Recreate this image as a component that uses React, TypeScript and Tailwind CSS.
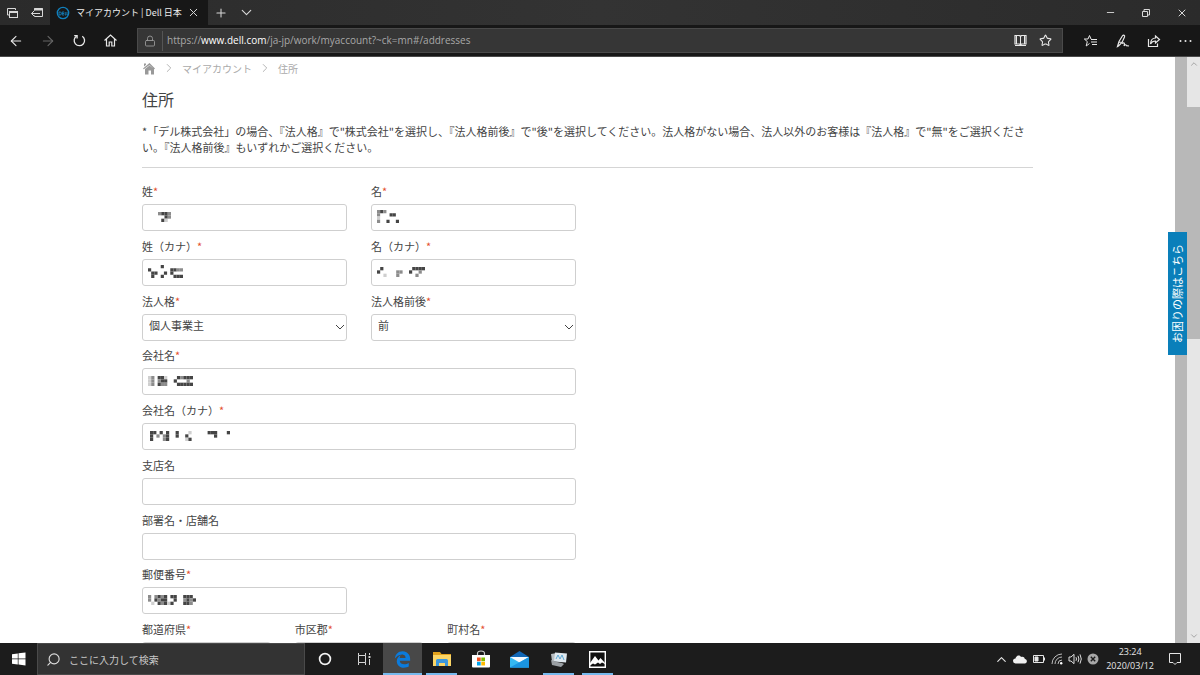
import type { ReactNode } from "react"
import { ArrowLeft, ArrowRight, ChevronDown, ChevronRight, ChevronUp, Lock, Minus, Plus, Search, Star, X } from "lucide-react"
import { FaEdgeLegacy } from "react-icons/fa6"

const SHADES: Record<string, string> = { "#": "#454545", "+": "#8c8c8c", ".": "#cfcfcf" }

// Pixelated personal data, one character per block
function Mosaic({ rows, className }: { rows: string[]; className: string }) {
    const cols = Math.max(...rows.map((r) => r.length))
    return (
        <svg
            className={`pointer-events-none absolute ${className}`}
            width={Math.round(cols * 3.2)}
            height={Math.round(rows.length * 3.2)}
            viewBox={`0 0 ${cols} ${rows.length}`}
            preserveAspectRatio="none"
            aria-hidden="true"
        >
            {rows.flatMap((row, y) =>
                row.split("").map((c, x) =>
                    SHADES[c] ? <rect key={`${x}-${y}`} x={x} y={y} width="1" height="1" fill={SHADES[c]} /> : null
                )
            )}
        </svg>
    )
}

const boxStyle = "block h-[27px] w-full rounded-[3px] border border-[#cfcfcf] bg-white px-1.5 text-[11px] text-[#444] outline-none"

function Label({ id, text, required }: { id: string; text: string; required?: boolean }) {
    return (
        <label htmlFor={id} className="block h-6 text-[11px] leading-[22px] whitespace-nowrap">
            {text}
            {required && <span className="text-[#e4502e]">*</span>}
        </label>
    )
}

function Field({ id, text, required, children }: { id: string; text: string; required?: boolean; children?: ReactNode }) {
    return (
        <div>
            <Label id={id} text={text} required={required} />
            <div className="relative">
                <input id={id} type="text" className={boxStyle} />
                {children}
            </div>
        </div>
    )
}

function SelectField({ id, text, options }: { id: string; text: string; options: string[] }) {
    return (
        <div>
            <Label id={id} text={text} required />
            <div className="relative">
                <select id={id} className={`${boxStyle} appearance-none pb-1`}>
                    {options.map((o) => (
                        <option key={o}>{o}</option>
                    ))}
                </select>
                <svg className="pointer-events-none absolute top-2.5 right-0.5" width="10" height="7" fill="none" stroke="#444">
                    <path d="M1 1l4 4 4-4" />
                </svg>
            </div>
        </div>
    )
}

function TitleBar() {
    return (
        <div className="flex h-[25px] items-stretch bg-linear-to-r from-[#2b2b2b] via-[#333] to-[#2b2b2b] text-[#d8d8d8]">
            <div className="flex w-[50px] items-center justify-between pr-1.5 pl-1.5">
                <button aria-label="タブ一覧">
                    <svg width="13" height="12" fill="none" stroke="currentColor">
                        <path d="M3 8H1.500V1.500H9.500V3" />
                        <rect x="3.500" y="4.500" width="8" height="6" />
                        <path d="M3.500 5h8" strokeWidth="2" />
                    </svg>
                </button>
                <button aria-label="タブを保存">
                    <svg width="14" height="12" fill="none" stroke="currentColor">
                        <path d="M4.500 3.500v-2h8v8h-8v-1" />
                        <path d="M4 2.500h9" strokeWidth="2" />
                        <path d="M10 6.500H1.500M4 4L1.500 6.500 4 9" />
                    </svg>
                </button>
            </div>
            <div className="flex w-[158px] items-center bg-[#171717] pr-2 pl-1.5">
                <svg width="14" height="14" fill="none" stroke="#1180bd" className="shrink-0">
                    <circle cx="7" cy="7" r="5.700" strokeWidth="1.300" />
                    <path d="M3 6v3h1.200c1.500 0 1.500-3 0-3zM8 6H6.200v3H8M6.200 7.500H8M9.200 6v3h1M11 6v3h1" strokeWidth=".9" />
                </svg>
                <span className="ml-1.5 flex-1 text-[9px] whitespace-nowrap text-[#eee]">マイアカウント | Dell 日本</span>
                <button aria-label="タブを閉じる"><X size={13} strokeWidth={1.800} /></button>
            </div>
            <div className="flex flex-1 items-center gap-2.5 pl-1.5">
                <button aria-label="新しいタブ"><Plus size={14} strokeWidth={1.800} /></button>
                <button aria-label="タブのメニュー"><ChevronDown size={17} strokeWidth={1.600} /></button>
            </div>
            <div className="flex items-center">
                <button aria-label="最小化" className="flex w-9 justify-center"><Minus size={11} strokeWidth={2} /></button>
                <button aria-label="元に戻す" className="flex w-9 justify-center">
                    <svg width="10" height="10" fill="none" stroke="currentColor">
                        <path d="M1.500 3.500h5v5h-5zM3 3V1.500h5.500V7H7" />
                    </svg>
                </button>
                <button aria-label="閉じる" className="flex w-9 justify-center"><X size={12} strokeWidth={2} /></button>
            </div>
        </div>
    )
}

function ToolBar() {
    return (
        <div className="flex h-8 items-center border-b border-[#4a4a4a] bg-[#171717] text-[#e8e8e8]">
            <div className="flex w-[137px] shrink-0 items-center gap-4 pl-2">
                <button aria-label="戻る"><ArrowLeft size={16} strokeWidth={1.600} /></button>
                <button aria-label="進む" className="text-[#666]"><ArrowRight size={16} strokeWidth={1.600} /></button>
                <button aria-label="更新">
                    <svg width="15" height="15" fill="none" stroke="currentColor" strokeWidth="1.300">
                        <path d="M10.300 3.200A5.200 5.200 0 1 1 4.600 3.100" />
                        <path d="M2.200 2.600h2.900v2.900" />
                    </svg>
                </button>
                <button aria-label="ホーム">
                    <svg width="15" height="15" fill="none" stroke="currentColor" strokeWidth="1.200">
                        <path d="M1.500 7.500l6-5.500 6 5.500M3.500 6v7h2.700V9h2.600v4h2.700V6" />
                    </svg>
                </button>
            </div>
            <div className="flex h-[25px] flex-1 items-center border border-[#4a4a4a] bg-[#363636] px-1.5">
                <Lock size={12} strokeWidth={1.800} className="text-[#999]" />
                <span className="ml-1.5 h-5 border-l border-[#555] pl-1" />
                <div className="flex-1 font-['Open_Sans',sans-serif] text-[10px] whitespace-nowrap text-[#a8a8a8]">
                    https://<span className="text-white">www.dell.com</span>/ja-jp/work/myaccount?~ck=mn#/addresses
                </div>
                <button aria-label="読み取り表示">
                    <svg width="13" height="13" fill="none" stroke="currentColor">
                        <path d="M1 1.500h4.500l1 1 1-1H12V10H7.500l-1 1-1-1H1z" strokeWidth="1.200" />
                        <path d="M6.500 2v9M2.500 2v8M10.500 2v8M1 11.500h11" />
                    </svg>
                </button>
                <button aria-label="お気に入りに追加" className="mr-1 ml-3"><Star size={13} strokeWidth={2} /></button>
            </div>
            <div className="flex w-[137px] shrink-0 items-center justify-between pr-2 pl-5">
                <button aria-label="お気に入り">
                    <svg width="15" height="14" fill="none" stroke="currentColor">
                        <path d="M8 5L6.500 1.500 5 5H1.300l3 2.600L3.200 12l3.300-2.500M8 5.500h6M8 8h6M9 10.500h5" />
                    </svg>
                </button>
                <button aria-label="ノートの追加">
                    <svg width="14" height="14" fill="none" stroke="currentColor" strokeWidth="1.200">
                        <path d="M1.500 12.500L3 7.500 6.500 1.800c1-1.200 2.600-.3 2 1.200L6 8.500 2.500 12zM3 8l3 .5M6 9.500c2.500-1.500 3 0 2 2.500 1.200-1.600 2-1.600 2.500-.3l2.500.3" />
                    </svg>
                </button>
                <button aria-label="共有">
                    <svg width="14" height="14" fill="none" stroke="currentColor" strokeWidth="1.200">
                        <path d="M1.500 5v7.500h9V9.500" />
                        <path d="M8.500 2l4 3.500-4 3.500V7C6 7 4.500 8 3.500 10 3.700 6.500 5.500 4 8.500 4z" />
                    </svg>
                </button>
                <button aria-label="設定など">
                    <svg width="13" height="4" fill="currentColor">
                        <circle cx="1.500" cy="2" r="1" />
                        <circle cx="6.500" cy="2" r="1" />
                        <circle cx="11.500" cy="2" r="1" />
                    </svg>
                </button>
            </div>
        </div>
    )
}

function AddressPage() {
    return (
        <main className="min-w-0 flex-1 overflow-hidden bg-white pr-[142px] pl-[142px] text-[#444]">
            <nav className="flex h-[22px] items-center gap-1.5 text-[10px] text-[#aaa]">
                <a href="#home" aria-label="ホーム">
                    <svg width="14" height="13" fill="#999">
                        <path d="M1 6.500L7.500 1 13 6.500l-.8.800L7.500 3 1.800 7.300zM2 1.500h2v1.300L2 4.500zM3 7l4.500-3.500L12 7v5.500H9V8.500H6.500v4H3z" />
                    </svg>
                </a>
                <ChevronRight size={14} strokeWidth={1.500} />
                <a href="#account">マイアカウント</a>
                <ChevronRight size={14} strokeWidth={1.500} />
                <span>住所</span>
            </nav>
            <h1 className="mt-2 text-[16px] leading-6">住所</h1>
            <p className="mt-3 border-b border-[#d5d5d5] pb-3 text-[11px] leading-4">
                *「デル株式会社」の場合、『法人格』で"株式会社"を選択し、『法人格前後』で"後"を選択してください。法人格がない場合、法人以外のお客様は『法人格』で"無"をご選択ください。『法人格前後』もいずれかご選択ください。
            </p>
            <form className="mt-3 flex w-[434px] flex-col gap-[3px]">
                <div className="grid grid-cols-2 gap-x-6 gap-y-1">
                    <Field id="sei" text="姓" required>
                        <Mosaic className="top-2 left-4" rows={["+##+", "  #+", " #."]} />
                    </Field>
                    <Field id="mei" text="名" required>
                        <Mosaic className="top-1.5 left-1.5" rows={["+#+", "+   ##", ".", "+  #  #"]} />
                    </Field>
                    <Field id="sei-kana" text="姓（カナ）" required>
                        <Mosaic className="top-1.5 left-1.5" rows={["    #", "#      ##++", " ##  # #", " #  #   ###"]} />
                    </Field>
                    <Field id="mei-kana" text="名（カナ）" required>
                        <Mosaic className="top-2 left-1.5" rows={[" #         ####", "#     ++  #  +", "  .   +     +"]} />
                    </Field>
                    <SelectField id="type" text="法人格" options={["個人事業主", "株式会社", "無"]} />
                    <SelectField id="position" text="法人格前後" options={["前", "後"]} />
                </div>
                <div className="grid gap-y-1">
                    <Field id="company" text="会社名" required>
                        <Mosaic className="top-2 left-1.5" rows={[".+ ##.   #+###", ".+ +##  #   + ", ".+ #++   #####"]} />
                    </Field>
                    <Field id="company-kana" text="会社名（カナ）" required>
                        <Mosaic className="top-2 left-2" rows={["## # #  #   .     ###   #", "# + +#  #  #        #", "#   +#     .#"]} />
                    </Field>
                    <Field id="branch" text="支店名" />
                    <Field id="department" text="部署名・店舗名" />
                </div>
                <div className="grid gap-y-1">
                    <div className="grid grid-cols-2 gap-x-6">
                        <Field id="zip" text="郵便番号" required>
                            <Mosaic className="top-2 left-1.5" rows={["+ +#+# ##  ###", "+ #+##  #  +#+#", " . #+#.#   ##+"]} />
                        </Field>
                    </div>
                    <div className="grid grid-cols-3 gap-x-6">
                        <Field id="prefecture" text="都道府県" required />
                        <Field id="city" text="市区郡" required />
                        <Field id="town" text="町村名" required />
                    </div>
                </div>
            </form>
        </main>
    )
}

function TaskButton({ label, running, active, children }: { label: string; running?: boolean; active?: boolean; children: ReactNode }) {
    return (
        <button aria-label={label} className={`relative flex h-full w-[39px] items-center justify-center ${active ? "bg-[#484848]" : ""}`}>
            {children}
            {running && <span className={`absolute bottom-0 h-0.5 bg-[#76b9ed] ${active ? "inset-x-0" : "inset-x-1"}`} />}
        </button>
    )
}

function TaskBar() {
    return (
        <footer className="flex h-8 shrink-0 items-center bg-[#1c1c1c] text-[#e6e6e6]">
            <button aria-label="スタート" className="flex w-[37px] justify-center">
                <svg width="14" height="14" fill="white">
                    <path d="M0 2.200L5.800 1.400V6.600H0zM6.500 1.300L13.500.4V6.600H6.500zM0 7.300H5.800V12.500L0 11.700zM6.500 7.300H13.500V13.500L6.500 12.600z" />
                </svg>
            </button>
            <div className="flex h-full w-[268px] items-center border border-[#4a4a4a] bg-[#333] pl-2">
                <Search size={15} strokeWidth={1.800} className="-scale-x-100 text-[#ddd]" />
                <input
                    type="text"
                    aria-label="検索"
                    placeholder="ここに入力して検索"
                    className="ml-2 h-6 flex-1 bg-transparent text-[10px] outline-none placeholder:text-[#c8c8c8]"
                />
            </div>
            <TaskButton label="Cortana">
                <svg width="14" height="14" fill="none" stroke="#f2f2f2" strokeWidth="1.700"><circle cx="7" cy="7" r="5.400" /></svg>
            </TaskButton>
            <TaskButton label="タスクビュー">
                <svg width="14" height="14" fill="none" stroke="#d5d5d5">
                    <path d="M1.500 1v2.500h7V1M1.500 13v-2.500h7V13M1.500 3.500v7M8.500 3.500v7M12.500 1v2M12.500 7v6" />
                    <path d="M12.500 4v2" strokeWidth="2" />
                </svg>
            </TaskButton>
            <TaskButton label="Microsoft Edge" running active><FaEdgeLegacy size={17} color="#0b7bdc" /></TaskButton>
            <TaskButton label="エクスプローラー" running>
                <svg width="18" height="16">
                    <path d="M0 1h7l1.500 2H18v12H0z" fill="#e2a11c" />
                    <path d="M0 4h18v11H0z" fill="#fbd566" />
                    <path d="M3 15V9.500Q3 8 4.500 8h9Q15 8 15 9.500V15h-3v-3H6v3z" fill="#3c97dd" />
                </svg>
            </TaskButton>
            <TaskButton label="Microsoft Store">
                <svg width="18" height="18">
                    <path d="M5.500 6V3.500Q5.500 1 9 1t3.500 2.500V6" fill="none" stroke="#ccc" strokeWidth="1.200" />
                    <path d="M0 5h18v11.500q0 1-1 1H1q-1 0-1-1z" fill="white" />
                    <path d="M5 7.500h3.700v3.700H5z" fill="#f25022" />
                    <path d="M9.300 7.500H13v3.700H9.300z" fill="#7fba00" />
                    <path d="M5 11.800h3.700v3.700H5z" fill="#00a4ef" />
                    <path d="M9.300 11.800H13v3.700H9.300z" fill="#ffb900" />
                </svg>
            </TaskButton>
            <TaskButton label="メール">
                <svg width="19" height="17">
                    <path d="M0 6l9.500-6L19 6v10.500H0z" fill="#1066b5" />
                    <path d="M0 6h19v10.500H0z" fill="#35b8f1" />
                    <path d="M0 6h19l-9.500 5.500z" fill="#f5f9fd" />
                    <path d="M0 16.500L19 6v10.500z" fill="#1a94e0" />
                </svg>
            </TaskButton>
            <TaskButton label="デバイス" running>
                <svg width="18" height="17">
                    <path d="M1 3l6-1v8H2z" fill="#b8bec2" />
                    <path d="M5 1.500l12 1-1 9-12-1z" fill="#dfe8ee" />
                    <path d="M6 8l2-4 2 4 2-4 2 5" fill="none" stroke="#5fa9d5" />
                    <path d="M1 9l6 2 5 1 2 1-3 3-9-2z" fill="#9a9fa3" />
                </svg>
            </TaskButton>
            <TaskButton label="フォト" running>
                <svg width="17" height="17">
                    <path d="M.7.700h15.600v15.600H.7z" fill="#111" stroke="white" strokeWidth="1.400" />
                    <path d="M1 12l5-7 3.500 4.500 2-2.500L16 12v1l-3-1.500-2 1.500-2-1.500-3 2-2-1-3 2z" fill="white" />
                </svg>
            </TaskButton>
            <div className="ml-auto flex items-center gap-1">
                <ChevronUp size={15} strokeWidth={1.800} />
                <svg width="15" height="14" fill="#f0f0f0">
                    <path d="M2.500 11.500a2.500 2.500 0 0 1 0-5C3 3.500 6.500 2.500 8 5c2.500-.8 3.800.8 3.800 2 3 .3 2.500 4.500 0 4.500z" />
                </svg>
                <svg width="14" height="14" fill="none" stroke="currentColor">
                    <path d="M1.500 3.500h10v7h-10zM12.500 5.500v3" />
                    <path d="M3 5h3v4H3z" fill="currentColor" />
                </svg>
                <svg width="14" height="14" fill="none" stroke="#bdbdbd">
                    <path d="M2 12A10 10 0 0 1 12 2M5 12a7 7 0 0 1 7-7M8 12a4 4 0 0 1 4-4" />
                    <circle cx="11.200" cy="11.200" r="1.200" fill="white" stroke="none" />
                </svg>
                <svg width="14" height="14" fill="none" stroke="#ddd">
                    <path d="M1 5h2l3-2.700v9.400L3 9H1zM8 5.200q1 1.800 0 3.600M10 3.800q1.800 3.200 0 6.400M12 2.400q2.600 4.600 0 9.200" />
                </svg>
                <svg width="14" height="14">
                    <circle cx="7" cy="7" r="5.500" fill="#a8a8a8" />
                    <path d="M4.800 4.800l4.400 4.400M9.200 4.800L4.800 9.200" stroke="#1c1c1c" strokeWidth="1.400" />
                </svg>
            </div>
            <div className="ml-1.5 text-center font-['Open_Sans',sans-serif] text-[9px] leading-[14px]">
                <div>23:24</div>
                <div>2020/03/12</div>
            </div>
            <button aria-label="通知" className="mr-[18px] ml-3.5">
                <svg width="14" height="14" fill="none" stroke="currentColor">
                    <path d="M1.500 1.500h11v9H9L7 12.500l-2-2H1.500z" />
                </svg>
            </button>
        </footer>
    )
}

export default function App() {
    return (
        <div className="flex h-screen flex-col overflow-hidden font-['Noto_Sans_CJK_JP',sans-serif]">
            <header className="shrink-0">
                <TitleBar />
                <ToolBar />
            </header>
            <div className="relative flex min-h-0 flex-1">
                <AddressPage />
                <div className="w-3 bg-[#b8b8b8]" />
                <div className="flex w-[13px] flex-col items-center justify-between bg-[linear-gradient(#e6e6e6_50px,#b8b8b8_50px,#b8b8b8_282px,#e6e6e6_282px)] py-0.5 text-[#999]">
                    <ChevronUp size={10} />
                    <ChevronDown size={10} />
                </div>
                <button className="absolute top-[175px] right-[13px] flex h-[123px] w-[19px] items-center justify-center bg-[#0a7fba] text-[11px] text-white">
                    <span className="rotate-180 [text-orientation:sideways] [writing-mode:vertical-rl]">お困りの際はこちら</span>
                </button>
            </div>
            <TaskBar />
        </div>
    )
}
